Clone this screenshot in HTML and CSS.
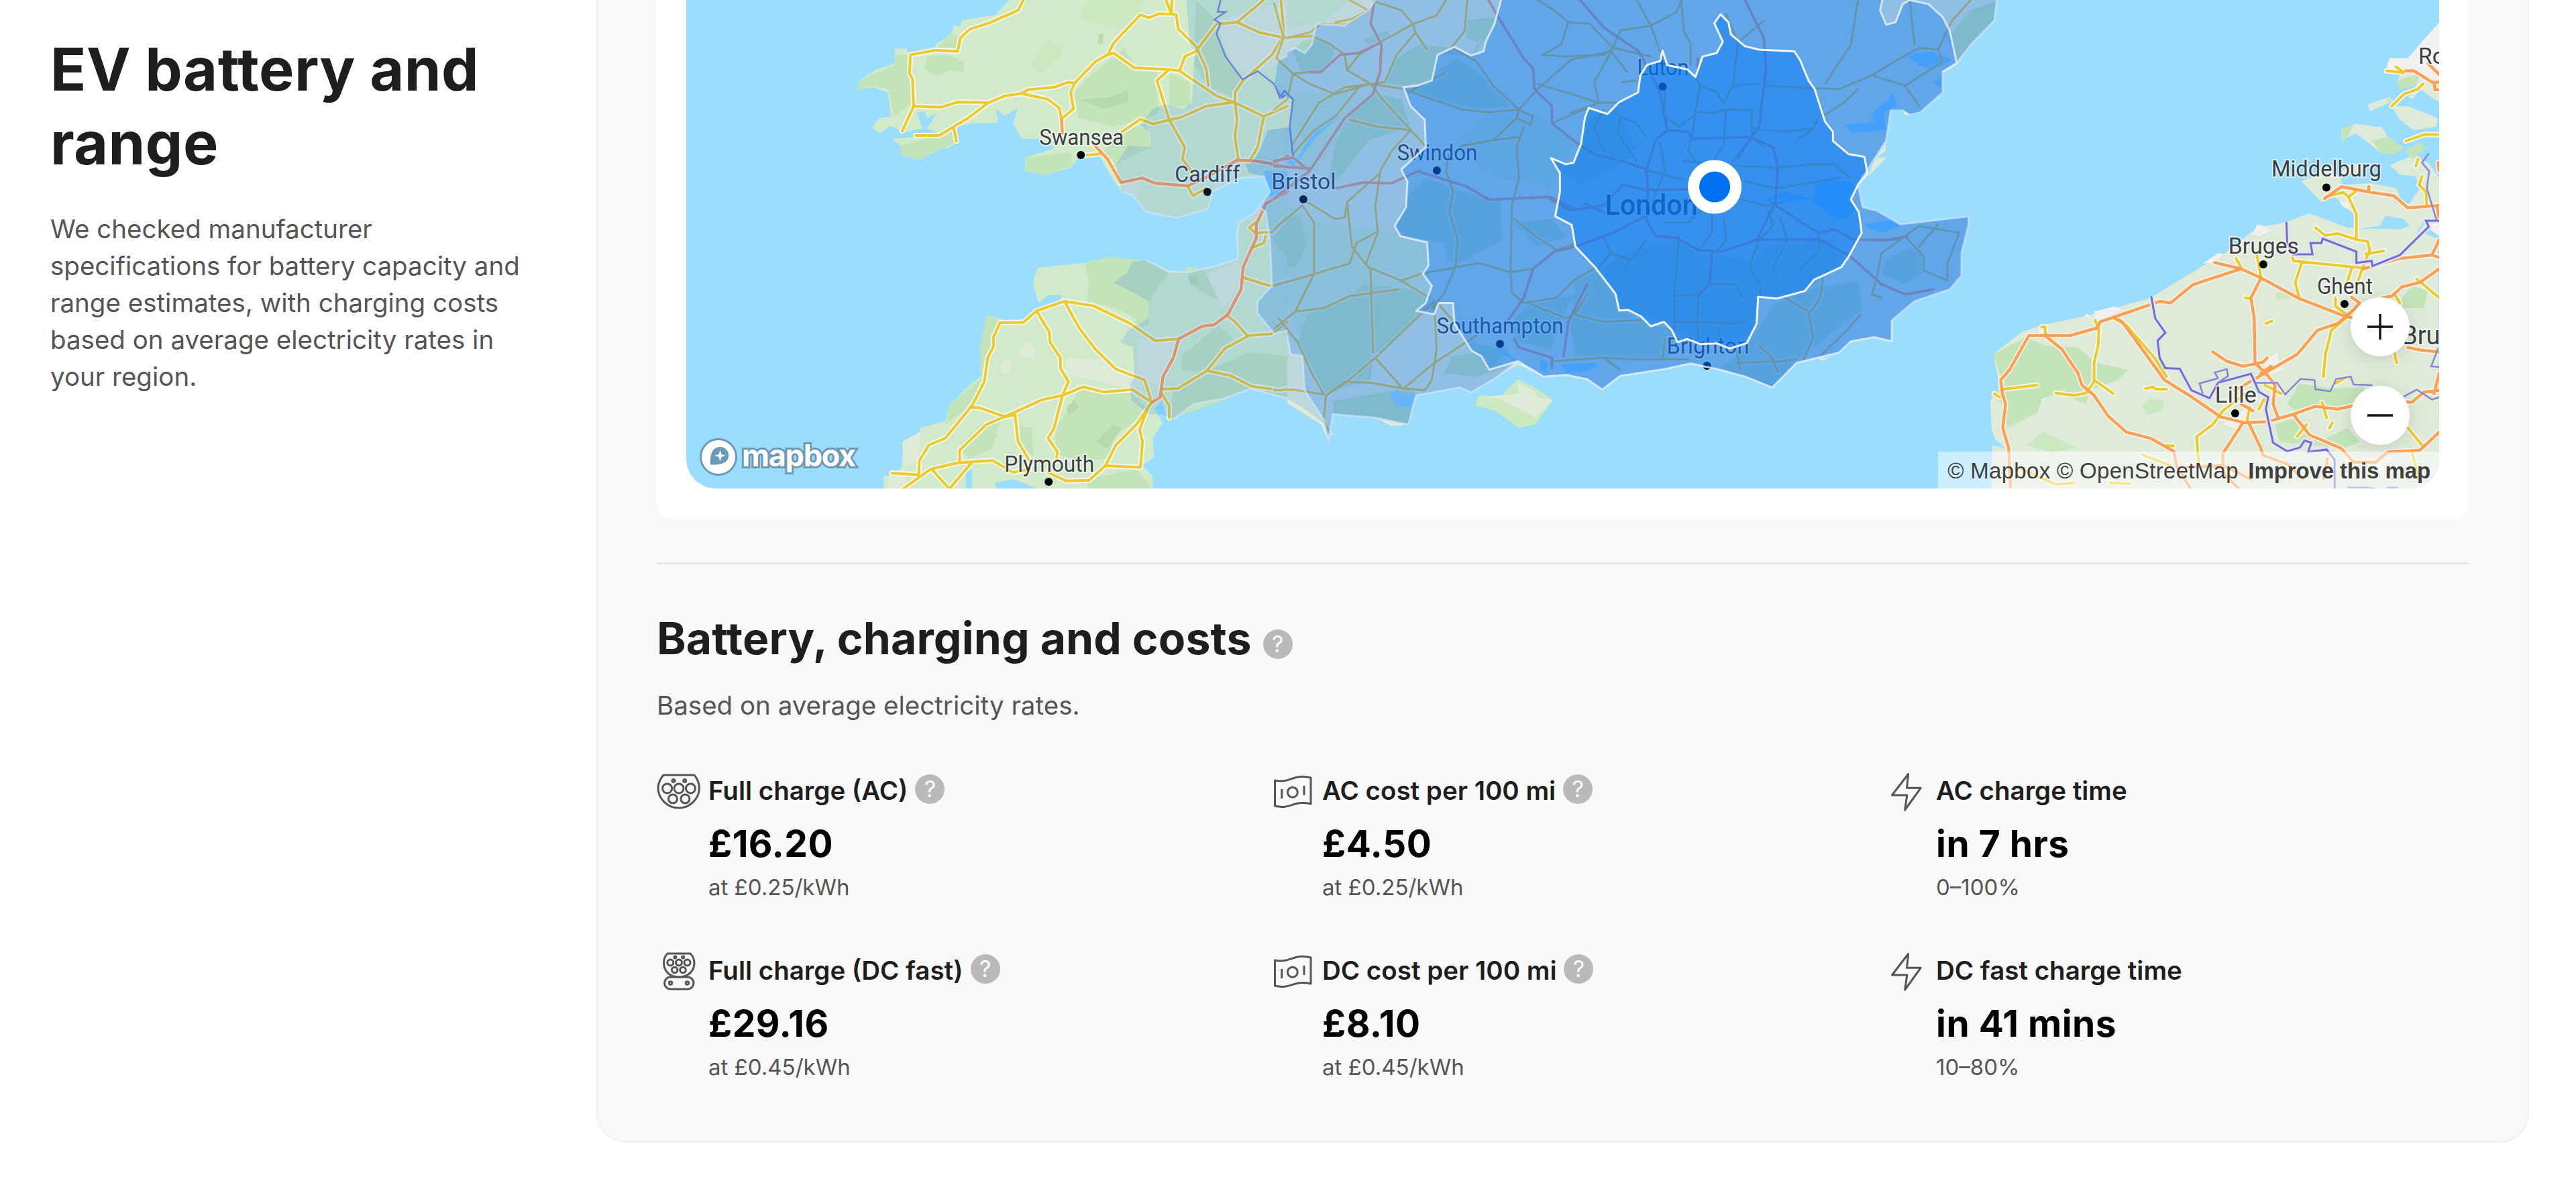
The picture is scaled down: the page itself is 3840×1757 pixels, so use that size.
FILE: index.html
```html
<!DOCTYPE html>
<html lang="en">
  <head>
    <meta charset="UTF-8" />
    <meta name="viewport" content="width=device-width, initial-scale=1.0" />
    <title>EV battery and range</title>
    <link rel="stylesheet" href="styles.css">
  </head>
  <body>
    <div class="page">
      <aside class="sidebar">
        <h1>EV battery and range</h1>
        <p>We checked manufacturer specifications for battery capacity and range estimates, with charging costs based on average electricity rates in your region.</p>
      </aside>

      <main class="panel">
        <!-- Range map -->
        <section class="map-card">
          <div class="map">
            <svg class="map-canvas" viewBox="1024 0 2612 728" preserveAspectRatio="none">
              <defs>
                <g id="west-yellow">
                  <path d="M925 0 L912 30 840 68 795 85 772 110 765 150 710 147 650 160 648 215 655 230 658 310 630 383 M658 310 L725 313 765 298 840 300 M663 396 L720 396 790 345 840 300 880 280 920 273 985 290 1012 315 1018 350 M755 370 L762 412 M920 273 L935 262 1000 255 1035 240 1050 243 1040 270 1047 318 1020 345 M1050 243 L1100 180 1130 160 1145 125 1210 43 1230 52 1255 40 1297 42 1302 85 1345 135 1370 200 1375 250 M1272 0 L1285 40 1287 0 M1130 160 L1145 155 1195 198 1280 203 1305 207 1395 280 1440 300 1510 340 1568 310 M1305 207 L1318 165 1345 150 1395 70 1445 65 1510 0 M1445 65 L1500 95 1568 112 M1280 203 L1250 235 1280 350 1318 430 1312 465 1340 510 M1165 385 L1210 348 1240 362 1310 342 1370 310 1440 298 1440 270 1460 235 1530 160 1555 110 M1440 298 L1445 350 1440 400 1448 465 M1510 340 L1495 430 1478 465 M1552 0 L1560 110 M1080 453 L1110 450 M1325 545 L1338 572 1370 550" />
                  <path d="M632 1428 L700 1370 765 1352 850 1345 900 1380 940 1370 M605 1382 L670 1387 672 1345 695 1300 735 1280 800 1185 830 1115 838 1045 853 1010 852 985 868 943 925 942 957 908 1025 880 1095 893 1185 945 1245 995 1303 990 M957 908 L988 970 990 1000 1015 1045 1015 1075 1035 1115 1020 1155 1000 1250 985 1280 1008 1320 1005 1345 M1025 880 L1050 935 1062 960 1100 1020 1150 1078 1220 1110 1235 1165 M795 1190 L815 1190 880 1217 905 1212 912 1290 945 1355 M770 1345 L770 1315 835 1240 880 1217 970 1168 1020 1155 1070 1130 1120 1145 1190 1138 1238 1175 M985 1380 L1030 1405 1085 1403 1125 1360 1150 1300 1200 1240 1238 1175 M1125 1360 L1210 1365 1215 1290 1208 1255 1230 1185 M705 1375 L745 1428 775 1385 800 1350 M1262 1137 L1300 1135 1372 1083 1415 1018 1475 980 1530 975 1568 940 M1372 1083 L1430 1097 1480 1128 1550 1140 1568 1135 M1458 810 L1525 835 1568 822 M1420 920 L1440 940 1470 980 M1262 1150 L1280 1185 1280 1220 M1490 680 L1530 678 1568 630 M1490 680 L1475 665 1495 645 M1515 690 L1510 710 1480 725" />
                </g>
                <g id="west-orange">
                  <path d="M1018 350 L1020 390 M1095 420 L1130 465 1162 533 1215 520 1245 535 1325 543 1375 515 1445 468 1490 470 1568 487 M1530 480 L1568 455 M1568 560 L1515 595 1492 655 1492 695 1460 780 1455 845 1423 918 1390 948 1360 953 1303 990 1290 1045 1265 1100 1258 1160 1238 1175" />
                </g>
                <g id="centre-yellow">
                  <path d="M28 110 L75 95 100 70 155 72 200 30 160 0 M200 30 L165 55 130 65 M0 10 L20 110 5 170 40 215 28 290 0 320 M20 110 L80 105 120 130 150 160 155 205 205 245 M40 215 L75 210 M155 205 L180 160 230 120 295 70 270 30 215 5 M295 70 L300 95 260 160 235 240 205 245 M295 70 L345 45 365 0 M410 0 L405 90 370 150 M300 95 L325 145 M40 215 L75 245 130 275 205 245 275 260 325 285 400 320 455 328 520 320 M235 240 L150 255 95 300 40 420 M180 255 L130 340 85 380 40 450 M205 245 L230 290 290 380 250 440 225 500 M290 380 L320 425 M160 350 L220 370 290 380 M285 270 L365 210 M520 320 L465 250 430 180 380 140 M520 320 L515 345 545 365 550 340 520 320 560 260 630 175 715 150 M515 345 L465 410 400 425 370 455 365 500 M465 410 L520 400 M530 370 L515 430 520 520 505 600 502 795 M365 500 L380 560 372 620 390 700 385 780 360 860 335 900 M60 600 L85 650 85 800 45 910 M60 600 L0 670 M70 590 L130 640 150 635 155 590 225 505 M155 590 L165 720 205 790 210 1030 M225 505 L215 600 220 680 195 770 M0 835 L85 800 160 770 175 710 215 680 M200 780 L270 820 310 800 435 768 502 795 550 785 M270 820 L330 870 M45 910 L105 900 160 865 265 845 M0 960 L45 910 M10 930 L50 1000 80 1090 105 1150 M340 880 L345 1020 335 1110 320 1140 M340 880 L215 1045 150 1120 110 1155 105 1230 118 1265 M215 1045 L270 1130 M110 1155 L150 1115 205 1118 275 1135 320 1140 M0 1140 L40 1138 105 1152 M350 890 L385 945 M430 980 L340 1060 275 1135" />
                  <path d="M560 0 L600 35 625 65 610 130 570 160 620 165 700 160 720 140 800 165 M625 65 L670 70 720 140 735 90 800 75 M770 0 L800 75 820 150 M865 0 L870 90 885 130 885 190 M800 75 L855 35 865 0 M720 140 L680 240 690 300 735 300 M715 150 L750 210 M630 330 L690 300 M560 245 L620 270 690 300 M740 240 L770 235 M590 360 L640 330 670 315 M1040 60 L985 125 M1240 0 L1225 130 1170 245 M1150 258 L1200 260 1270 220 1330 170 1370 140 1410 145 1420 180 M1350 0 L1360 130 M1480 0 L1440 60 1410 145 M1170 335 L1210 300 1240 260 M1270 220 L1340 250 1370 310 M1420 180 L1340 250 M510 640 L555 690 600 730 640 710 M502 795 L505 855 530 885 600 870 640 815 680 785 M640 915 L620 930 540 885 M640 920 L700 940 780 935 M590 1055 L700 1045 760 1050 880 1050 M700 1045 L735 1080 M640 915 L665 860 M825 1045 L830 990 M980 1060 L1075 1055 1110 1050 M1030 1010 L1055 1040 1070 1085 M980 1010 L990 1080 M1085 870 L1135 910 1145 985 1125 1050 M1165 815 L1160 870 1140 910 M1280 810 L1270 860 1290 870 M1245 920 L1220 960 1160 1040 M1250 700 L1330 700 1370 660 1455 680 M1340 690 L1380 750 1380 790 1430 820 M1455 680 L1430 770 1430 820 M1340 690 L1290 740 1280 810 M1410 655 L1370 720" />
                  <path d="M895 325 L930 330 960 320 1015 322 1015 400 M895 225 L905 250 895 325 890 380 M905 250 L940 270 955 300 975 250 1030 245 M960 40 L985 125 975 250 M960 320 L955 420 930 480 M1040 250 L1150 258 M1015 375 L1080 385 1145 375 1155 350 M1145 375 L1110 410 M890 380 L880 440 900 480 M830 250 L830 340 860 370 890 340 M735 340 L770 360 790 400 M700 320 L680 370 700 440 M735 340 L730 390 770 470 M800 500 L870 525 M800 600 L830 500 820 420 M870 470 L930 480 1065 490 1140 480 1190 480 1220 515 M975 470 L1015 400 1040 430 M1000 530 L1065 550 1200 520 M985 580 L1040 600 1085 590 M830 650 L880 650 910 610 M930 630 L930 680 900 735 M860 690 L850 860 850 965 M900 860 L900 1000 M850 865 L900 860 925 830 980 830 995 870 M845 940 L900 940 975 945 1020 930 M955 640 L960 700 940 735 M1030 700 L1010 780 1035 840 1030 870 M1050 620 L1060 660 1030 700 M1075 640 L1090 700 1060 780 1070 810 M1155 680 L1160 730 1115 790 M700 690 L715 740 760 760 790 700 M715 740 L690 780 M740 800 L755 760 M945 960 L950 1000" />
                </g>
                <g id="centre-orange">
                  <path d="M213 0 L205 70 228 130 225 210 210 275 150 345 75 500 0 580 M75 210 L100 210 140 160 180 155 225 125 M0 470 L40 460 75 500 M0 485 L75 492 M130 550 L190 533 250 535 305 500 410 545 455 583 585 575 640 610 M455 0 L485 70 530 170 550 200 553 260 590 310 590 360 640 415 M650 0 L700 80 775 150 820 270 M1000 0 L1040 110 1045 200 M900 170 L900 210 M640 720 L595 735 550 785 530 870 495 940 M1225 750 L1290 830 1340 860 1400 845 M1235 700 L1300 702 1345 690 M510 990 L520 1015 590 1045 590 1075 M615 1040 L625 940 665 830" />
                  <path d="M820 270 L835 380 880 385 890 405 1010 400 1060 430 1070 490 1065 590 1025 700 950 735 900 730 855 695 810 690 790 640 795 560 790 500 810 410 835 380 M640 415 L680 450 750 475 800 500 M585 580 L630 615 700 600 740 540 790 555 890 552 M640 720 L720 680 790 630 M1045 200 L1030 370 985 460 M1065 600 L1110 640 1155 680 1190 670 1230 700 M1025 700 L1160 700 1225 750 M930 735 L925 830 900 865 M660 595 L700 620" />
                </g>
                <g id="east-yellow">
                  <path d="M1097 207 L1140 212 1120 195 M1110 310 L1140 275 1175 260 1188 245 M1145 412 L1190 393 1228 393 M1175 465 L1170 485 M1185 515 L1178 540 1195 560 1197 600 M945 575 L990 562 1002 575 1022 625 1022 700 1050 705 1055 730 1035 790 1025 825 M1002 575 L1020 560 M920 665 L945 688 975 682 1022 700 M1045 742 L1090 733 M862 745 L865 762 1040 783 M887 765 L870 825 880 870 M775 745 L785 812 M1010 785 L1000 820 M723 755 L735 780 M1172 815 L1228 870 M970 870 L970 895 1005 925 M1000 925 L960 965 945 1035 940 1100 M745 870 L760 872 M797 945 L812 938 M240 955 L248 955 250 980 M372 935 L382 960 380 1010 370 1060 370 1110 418 1150 M370 1115 L350 1148 320 1155 275 1148 M145 1137 L228 1125 M122 1150 L135 1160 M420 930 L450 950 520 1045 550 1100 M498 1135 L515 1130 525 1137 550 1137 M665 1240 L625 1275 630 1360 M665 1240 L690 1200 745 1150 M757 1190 L750 1230 M780 1195 L795 1160 M795 1125 L835 1150 M937 1175 L948 1220 M898 1240 L875 1275 M955 1250 L962 1235 M548 1302 L568 1302 M1120 865 L1130 885 M1117 1030 L1122 1060 M1150 1250 L1185 1300 M970 1120 L995 1103 M180 1365 L275 1415 320 1410 M410 1410 L460 1413 M490 1328 L560 1360 M1160 1320 L1175 1390" />
                </g>
                <g id="east-orange">
                  <path d="M1228 240 L1210 240 1165 207 1145 207 M1200 185 L1228 218 M1215 240 L1217 262 1228 262 M943 580 L985 545 1050 560 1115 572 1150 607 1228 600 M985 545 L1025 555 M1053 545 L1053 560 M1225 475 L1228 500 M1222 600 L1228 640 M1228 700 L1210 745 1228 752 M670 767 L735 785 785 812 880 872 985 920 1010 928 M735 785 L615 832 560 885 535 880 385 940 378 958 310 980 208 980 160 1080 138 1110 142 1150 150 1180 143 1250 158 1310 162 1428 M785 812 L760 870 768 930 770 1060 800 1095 820 1125 815 1180 828 1222 M665 1028 L700 1055 740 1070 790 1058 800 1045 M720 1140 L750 1120 875 1035 925 965 975 945 1015 905 1030 885 1010 868 M1040 785 L1130 755 1210 745 M1228 785 L1180 825 1135 838 1110 865 1085 870 M248 980 L290 1020 330 1090 340 1125 370 1155 405 1215 450 1262 510 1280 568 1318 575 1360 610 1428 M420 928 L440 940 545 1110 600 1150 685 1218 745 1235 800 1232 865 1210 920 1187 975 1195 1070 1170 1160 1175 1190 1145 1228 1140 M865 1210 L905 1270 985 1310 1015 1350 1070 1350 1100 1320 1180 1315 1228 1262 M740 1235 L690 1325 690 1380 730 1428 M755 1237 L785 1310 790 1330 850 1355 890 1400 M1150 1015 L1180 1022 1228 1028 M735 1180 L765 1200 M810 1070 L785 1090 M600 1365 L690 1360 760 1400 M950 1340 L940 1400 M1228 1090 L1215 1150" />
                </g>
              </defs>

              <!-- Land -->
              <g class="west">
                <path class="grass" d="M890 0 L855 45 820 50 775 60 772 80 757 72 750 100 712 130 708 150 645 155 640 142 612 142 612 185 565 205 525 235 520 262 560 255 595 270 603 340 575 345 557 370 575 390 600 368 640 385 680 375 665 330 685 325 690 345 715 330 690 375 720 390 700 402 660 400 605 405 625 425 630 455 675 467 700 440 740 432 765 415 765 370 800 360 865 358 858 320 880 338 912 315 900 360 920 405 960 405 1000 430 985 440 930 460 928 498 975 512 1040 490 1060 460 1110 455 1140 520 1165 560 1190 570 1225 620 1300 636 1375 610 1385 560 1450 520 1510 515 1525 560 1490 620 1450 650 1442 690 1448 755 1400 775 1330 795 1280 790 1225 760 1190 765 1135 750 1075 768 960 782 948 825 962 885 985 862 1020 862 1010 885 960 905 940 930 880 935 838 920 833 970 820 1010 825 1095 790 1130 745 1185 735 1230 675 1250 670 1275 632 1290 628 1385 585 1390 585 1428 L1240 1428 1240 1390 1215 1360 1243 1335 1240 1280 1265 1235 1265 1210 1290 1225 1340 1180 1410 1165 1480 1135 1568 1165 1568 0 Z" />
                <path class="wood" d="M690 165 L740 160 780 180 780 210 745 205 715 222 685 200 Z M612 160 L645 160 650 200 655 300 610 340 598 262 565 250 520 262 525 235 612 190 Z M750 95 L770 110 765 150 712 145 Z M625 425 L765 380 760 415 675 465 628 455 Z M1080 230 L1170 140 1200 200 1250 210 1255 330 1225 345 1145 370 1060 345 1050 270 Z M930 460 L1040 445 1045 485 975 512 930 500 Z M1160 385 L1225 360 1235 430 1150 480 1120 440 Z M1280 215 L1330 240 1330 310 1280 310 Z M1075 770 L1135 750 1225 762 1280 795 1240 860 1230 900 1230 950 1150 900 1080 880 1085 820 Z M1320 780 L1360 785 1425 850 1400 880 1330 830 Z M1190 945 L1235 880 1220 955 Z M1060 1140 L1190 1150 1230 1200 1150 1270 1130 1340 1060 1345 1000 1325 1005 1250 Z M835 920 L875 940 835 1050 820 1100 820 1010 Z M825 1100 L800 1180 735 1240 745 1185 Z M770 1300 L820 1240 870 1230 850 1310 790 1340 Z M1310 1040 L1400 950 1440 1000 1370 1090 1310 1080 Z M1380 1080 L1470 1030 1568 1040 1568 1160 1480 1135 1420 1165 1280 1225 1290 1140 Z M905 1240 L945 1250 950 1330 910 1300 Z M1080 1400 L1200 1370 1240 1428 1080 1428 Z M1345 0 L1395 60 1400 110 1430 190 1455 235 1440 290 1375 250 1340 190 Z M1530 700 L1568 640 1568 750 Z" />
                <path class="lawn" d="M1080 0 L1220 0 1190 70 1140 80 1065 55 Z M940 190 L985 120 1025 130 1010 170 970 215 Z" />
                <path class="hill" d="M1060 290 L1130 285 1180 262 1180 300 1120 318 Z M1105 125 L1110 100 1120 98 1118 130 Z M1030 1190 L1050 1170 1060 1190 1035 1215 Z M1100 1290 L1145 1240 1165 1250 1130 1310 Z M1325 810 L1345 808 1355 830 1335 830 Z" />
                <path class="field" d="M915 1020 L935 998 955 1015 950 1045 915 1040 Z M870 1065 L885 1048 897 1055 890 1090 870 1088 Z M1030 1045 L1120 1050 1150 1085 1210 1115 1190 1135 1090 1110 1025 1090 Z M1395 60 L1568 0 1568 170 1480 220 1430 190 Z M1370 800 L1450 765 1455 830 1410 900 Z M630 1290 L675 1260 670 1345 600 1385 590 1428 640 1428 Z M1160 540 L1215 520 1200 575 1168 562 Z M1205 990 L1300 995 1260 1130 1200 1100 Z" />
                <path class="water" d="M1510 500 L1568 500 1568 555 1530 590 Z M1245 1195 L1262 1170 1275 1220 1265 1240 Z M855 1410 L900 1400 935 1415 960 1428 860 1428 Z M785 1380 L800 1370 800 1428 785 1428 Z" />
              </g>
              <g class="centre">
                <path class="field" d="M28 0 L1535 0 1530 60 1480 130 1450 185 1420 210 1420 270 1375 325 1340 335 1335 320 1310 320 1300 410 1260 500 1240 540 1250 605 1280 615 1330 655 1475 632 1475 655 1460 740 1460 805 1435 845 1360 880 1312 935 1312 997 1275 985 1225 997 1200 1030 1110 1060 1058 1132 1000 1100 940 1078 885 1062 830 1078 735 1098 697 1138 665 1108 620 1095 572 1100 518 1065 470 1105 418 1146 395 1132 302 1155 285 1240 250 1245 215 1220 125 1210 115 1290 100 1240 28 1178 Z" />
                <path class="grass" d="M28 0 L160 0 110 60 28 80 Z M28 280 L160 260 200 290 90 500 28 470 Z M75 640 L330 700 330 900 220 1040 150 1130 105 1150 60 1000 28 900 28 600 Z M380 420 L500 300 600 360 640 420 590 540 470 520 Z" />
                <path class="wood" d="M40 150 L60 120 95 110 130 140 110 210 60 220 Z M160 340 L205 270 270 290 290 370 200 410 150 500 110 560 130 420 Z M28 620 L55 640 70 720 45 780 28 775 Z M70 920 L150 880 190 830 320 850 330 900 210 1040 205 1110 110 1150 50 1000 Z M190 115 L240 90 250 110 200 130 Z M310 130 L380 140 430 160 440 110 418 162 347 160 335 235 275 250 235 240 260 170 Z M285 265 L390 170 480 260 500 310 430 320 330 290 Z M290 560 L320 520 400 560 480 580 485 700 390 770 370 760 360 710 280 690 256 660 Z M640 820 L690 790 730 850 740 910 800 950 850 960 840 1050 640 1040 630 960 Z M540 890 L640 860 610 930 590 1020 520 1000 500 950 Z M505 650 L590 640 620 690 560 720 Z M410 1000 L500 1020 457 1080 Z M125 1170 L300 1130 285 1240 215 1220 125 1210 Z M400 60 L470 50 460 100 440 130 410 110 Z M380 1040 L430 1030 500 1070 430 1100 360 1090 Z M1060 890 L1150 840 1240 820 1250 900 1150 1010 1110 1050 1058 1132 950 1075 1000 1020 1030 960 Z M1300 760 L1370 710 1380 790 1340 830 1290 800 Z M1430 110 L1480 30 1535 0 1530 60 1480 130 1450 185 Z M670 340 L730 310 770 430 750 470 650 540 610 500 650 450 Z M740 740 L860 700 900 740 1020 760 1040 720 1190 700 1200 780 1130 850 1030 870 1010 980 900 1000 830 940 740 900 700 790 Z" />
                <path class="water" d="M50 460 L90 370 130 330 135 345 90 400 40 490 28 480 28 455 Z M1340 160 L1400 150 1440 175 1400 205 1370 190 Z M1305 290 L1315 270 1322 310 1295 330 1300 380 1230 388 1210 365 1275 355 1270 330 Z M1145 590 L1150 540 1180 515 1235 540 1225 583 1240 610 1210 640 1180 630 1160 605 Z M1040 585 L1085 560 1145 580 1060 595 Z M1255 655 L1320 640 1330 660 1290 680 1260 665 Z M245 1150 L262 1140 270 1155 300 1150 290 1190 260 1185 Z M470 1020 L485 1020 530 1065 515 1060 Z M565 1055 L580 1055 578 1090 565 1080 Z M610 1065 L690 1060 670 1085 620 1090 Z M1400 240 L1418 225 1415 260 Z" />
                <path class="lawn" d="M518 1108 L550 1130 592 1168 555 1240 520 1250 470 1200 427 1185 435 1155 480 1160 Z" />
                <path class="field" d="M1262 515 L1285 430 1300 410 1298 440 1280 460 1300 460 1280 490 Z M435 1160 L520 1150 515 1115 550 1140 560 1160 592 1168 555 1220 520 1195 480 1165 Z M1340 325 L1380 325 1345 337 Z M1155 1047 L1182 1045 1165 1053 Z" />
              </g>
              <g class="east">
                <path class="field" d="M1228 65 L1150 170 1105 170 1095 205 1130 215 1122 250 1140 270 1155 285 1195 310 1228 375 1228 335 1180 310 1225 340 1228 1428 115 1428 117 1300 112 1170 135 1130 120 1035 190 970 240 950 360 920 510 870 600 805 700 735 775 665 845 650 905 623 1000 665 1130 670 1200 640 1228 640 Z" />
                <path class="water" d="M1180 260 L1228 300 1228 470 1190 440 1150 470 1145 420 1160 405 1228 380 1200 340 1150 310 Z M1000 660 L1030 670 1080 665 1100 625 1140 650 1165 660 1175 680 1190 655 1228 600 1228 560 1100 540 1060 520 1000 560 980 590 Z M1228 640 L1200 650 1190 680 1228 700 Z M1135 230 L1180 260 1140 290 1105 300 1100 270 Z M1060 500 L1228 500 1228 570 1100 540 Z M115 1250 L125 1285 150 1310 117 1300 Z" />
                <path class="field" d="M1110 310 L1150 310 1225 345 1220 370 1165 380 1130 350 Z M1050 305 L1105 283 1112 295 1085 310 1055 325 Z M985 410 L985 375 1020 362 1085 372 1100 400 1140 430 1115 452 1080 445 1050 415 1020 390 Z M885 530 L940 500 985 515 985 540 1060 535 1120 550 1130 570 1115 590 1150 600 1228 600 1228 640 1195 640 1170 680 1140 640 1095 630 1080 660 1020 670 1030 640 990 600 965 570 935 590 Z M1105 482 L1160 455 1200 475 1228 520 1228 600 1150 600 1180 550 1170 515 1130 510 Z M1035 585 L1075 580 1065 620 1035 628 Z M980 512 L1000 482 1045 478 1030 505 Z" />
                <path class="wood" d="M120 1035 L200 985 250 1010 330 1015 375 1060 455 1080 430 1110 360 1140 350 1180 280 1150 240 1165 230 1205 155 1250 143 1180 120 1160 140 1110 Z M850 1180 L880 1120 960 1135 1040 1130 1050 1175 990 1195 930 1185 870 1200 Z M820 1240 L870 1220 930 1290 1000 1250 1030 1290 990 1310 830 1290 Z M1130 880 L1160 835 1200 850 1190 900 1140 900 Z M985 375 L1015 365 1000 400 987 412 Z M1060 410 L1100 400 1140 430 1115 452 1080 445 Z M1145 440 L1180 415 1195 435 1160 465 Z M1122 235 L1180 215 1170 250 1130 260 Z" />
                <path class="lawn" d="M490 1185 L510 1165 545 1170 540 1200 500 1212 Z M200 1300 L245 1260 330 1310 260 1320 Z M820 855 L880 850 875 870 825 875 Z M1100 280 L1112 290 1095 305 Z" />
                <path class="urban" d="M1228 65 L1150 170 1105 170 1095 205 1145 200 1180 225 1228 240 Z M765 685 L775 655 790 660 810 672 780 690 Z M370 910 L420 895 440 905 400 925 375 935 Z M640 770 L680 738 690 745 660 768 Z M690 1240 L715 1210 760 1190 745 1240 720 1250 Z M790 1060 L825 1030 830 1060 845 1080 810 1090 Z M980 590 L1000 590 1005 612 990 605 Z M1050 1340 L1120 1330 1100 1350 1080 1380 Z M1195 640 L1228 640 1228 690 1205 670 Z M230 970 L240 950 255 960 250 975 Z M345 925 L352 915 365 930 Z M590 1350 L680 1345 690 1370 610 1375 Z" />
              </g>

              <!-- Roads and country borders -->
              <g class="west">
                <use class="road-casing" href="#west-yellow" />
                <use class="road-casing" href="#west-orange" />
                <use class="road-yellow" href="#west-yellow" />
                <use class="road-orange" href="#west-orange" />
                <path class="border thin" d="M1405 0 L1398 35 1417 35 1390 57 1405 68 1395 98 1417 165 1458 232 1495 208 1535 245 1552 285 1568 275" />
              </g>
              <g class="centre">
                <use class="road-casing soft" href="#centre-yellow" />
                <use class="road-casing soft" href="#centre-orange" />
                <use class="road-yellow narrow" href="#centre-yellow" />
                <use class="road-orange narrow" href="#centre-orange" />
                <path class="border thin" d="M2 250 L12 285 22 265 40 290 33 370 40 455" />
              </g>
              <g class="east">
                <use class="road-casing" href="#east-yellow" />
                <use class="road-casing" href="#east-orange" />
                <use class="road-yellow" href="#east-yellow" />
                <use class="road-orange" href="#east-orange" />
                <path class="border-halo" d="M512 865 L522 930 547 972 528 995 533 1045 547 1075 583 1077 612 1140 657 1163 678 1118 760 1092 780 1145 803 1160 797 1195 815 1293 850 1318 882 1307 893 1287 910 1293 902 1320 948 1313 968 1343 968 1428 M848 648 L850 710 865 743 913 743 908 710 935 710 938 697 1022 735 1022 768 1060 762 1062 777 1130 745 1202 662 1195 645 1228 645" />
                <path class="border" d="M512 865 L522 930 547 972 528 995 533 1045 547 1075 583 1077 612 1140 657 1163 678 1118 760 1092 780 1145 803 1160 797 1195 815 1293 850 1318 882 1307 893 1287 910 1293 902 1320 948 1313 968 1343 968 1428 M848 648 L850 710 865 743 913 743 908 710 935 710 938 697 1022 735 1022 768 1060 762 1062 777 1130 745 1202 662 1195 645 1228 645" />
                <path class="border thin" d="M1202 448 L1185 475 1203 500 1197 550 1222 645 M640 1150 L632 1120 678 1105 670 1088 700 1078 703 1098 678 1118 M770 1118 L825 1118 845 1152 883 1107 918 1110 920 1137 957 1143 972 1107 1008 1100 1015 1123 1062 1125 M1140 1158 L1172 1138 1210 1167 1228 1160 M1225 1018 L1208 1070 1228 1072 M1000 1424 L1050 1424 1070 1428 M1098 1424 L1125 1424" />
              </g>

              <!-- Cities -->
              <g class="city-dots">
                <circle cx="1612" cy="231" r="6" />
                <circle cx="1800.5" cy="286" r="6" />
                <circle cx="1943.5" cy="297" r="6" />
                <circle cx="1564" cy="718" r="6" />
                <circle cx="2142.5" cy="254" r="6" />
                <circle cx="2479" cy="129" r="6" />
                <circle cx="2236.5" cy="512.5" r="6" />
                <circle cx="2545" cy="545" r="6" />
                <circle cx="3468" cy="279.5" r="6" />
                <circle cx="3374" cy="394" r="6" />
                <circle cx="3495" cy="453" r="6" />
                <circle cx="3332" cy="616" r="6" />
              </g>
              <g class="city-names">
                <text x="1550" y="216.5" textLength="126" lengthAdjust="spacingAndGlyphs">Swansea</text>
                <text x="1752" y="271" textLength="97" lengthAdjust="spacingAndGlyphs">Cardiff</text>
                <text x="1896" y="282" textLength="96" lengthAdjust="spacingAndGlyphs">Bristol</text>
                <text x="1498" y="703" textLength="134" lengthAdjust="spacingAndGlyphs">Plymouth</text>
                <text x="2083" y="239" textLength="120" lengthAdjust="spacingAndGlyphs">Swindon</text>
                <text x="2441" y="112" textLength="77" lengthAdjust="spacingAndGlyphs">Luton</text>
                <text class="capital" x="2393" y="320.5" textLength="138" lengthAdjust="spacingAndGlyphs">London</text>
                <text x="2142" y="497.5" textLength="189" lengthAdjust="spacingAndGlyphs">Southampton</text>
                <text x="2485" y="527" textLength="123" lengthAdjust="spacingAndGlyphs">Brighton</text>
                <text x="3605" y="95.5">Ro</text>
                <text x="3386" y="263" textLength="164" lengthAdjust="spacingAndGlyphs">Middelburg</text>
                <text x="3322" y="378" textLength="105" lengthAdjust="spacingAndGlyphs">Bruges</text>
                <text x="3454" y="438" textLength="83" lengthAdjust="spacingAndGlyphs">Ghent</text>
                <text class="large" x="3580" y="513">Bru</text>
                <text x="3302" y="600" textLength="62" lengthAdjust="spacingAndGlyphs">Lille</text>
              </g>

              <!-- Range zones, widest first -->
              <g class="west">
                <path class="zone-1" d="M1322 0 L1330 130 1345 150 1340 190 1336 300 1315 318 1270 305 1240 318 1210 365 1232 385 1235 430 1180 425 1150 480 1165 560 1190 570 1225 620 1300 636 1375 610 1385 560 1450 520 1510 515 1525 560 1490 620 1450 650 1445 690 1448 755 1400 775 1330 795 1280 795 1225 760 1190 765 1175 800 1145 825 1232 880 1228 930 1180 965 1162 1000 1192 1015 1196 1100 1185 1120 1188 1170 1230 1210 1265 1210 1290 1225 1340 1180 1410 1165 1480 1135 1568 1165 1568 0 Z" />
                <path class="zone-2" d="M1568 165 L1545 180 1537 240 1555 290 1568 280 Z M1568 372 L1520 380 1500 440 1482 475 1465 480 1475 505 1510 515 1525 560 1500 605 1515 620 1525 700 1530 835 1495 880 1495 915 1535 975 1568 965 Z" />
                <path class="zone-line soft" d="M1165 560 L1190 570 1225 620 1300 636 1375 610 1385 560 1450 520 1510 515 1525 560 1490 620 1450 650 1445 690 1448 755 1400 775 1330 795 1280 795 1225 760 M1290 1225 L1340 1180 1410 1165 1480 1135 1568 1165 M1500 605 L1515 620 1525 700 1530 835 1495 880 1495 915 1535 975 1568 965" />
              </g>
              <g class="centre">
                <path class="zone-1" d="M28.509 0 L1535 0 1530 60 1480 130 1450 185 1420 210 1420 270 1375 325 1350 333 1335 320 1310 320 1300 410 1260 500 1240 540 1250 605 1280 615 1330 655 1475 632 1475 655 1460 740 1460 805 1435 845 1360 880 1312 935 1312 997 1275 985 1225 997 1200 1030 1110 1060 1058 1132 1000 1100 940 1078 885 1062 830 1078 735 1098 697 1138 665 1108 620 1095 572 1100 518 1055 470 1105 418 1146 395 1132 302 1155 285 1240 215 1220 125 1210 115 1290 105 1235 60 1190 28.509 1165 Z" />
                <path class="zone-2" d="M215 0 L200 30 150 75 90 70 80 130 65 155 45 140 28.509 150 28.509 285 40 290 35 370 28.509 372 28.509 980 35 1035 60 1040 65 1140 105 1225 115 1290 125 1210 215 1220 285 1240 302 1155 395 1132 418 1146 470 1105 518 1055 572 1100 620 1095 665 1108 697 1138 735 1098 830 1078 885 1062 940 1078 1000 1100 1058 1132 1110 1060 1200 1030 1225 997 1275 985 1312 997 1312 935 1360 880 1435 845 1460 805 1460 740 1475 655 1475 632 1330 655 1280 615 1250 605 1240 540 1260 500 1300 410 1310 320 1335 320 1350 333 1375 325 1420 270 1420 210 1450 185 1480 130 1530 60 1535 0 Z" />
                <path class="zone-3" d="M482 0 L468 70 450 120 445 150 418 162 383 137 347 160 335 235 305 250 275 255 290 310 320 350 322 430 270 495 283 530 280 605 256 660 268 690 325 708 328 775 316 800 335 835 322 885 302 908 340 918 350 885 380 885 383 945 420 1025 440 1040 457 1080 518 1055 572 1100 620 1095 665 1108 697 1138 735 1098 830 1078 885 1062 940 1078 1000 1100 1058 1132 1110 1060 1200 1030 1225 997 1275 985 1312 997 1312 935 1360 880 1435 845 1460 805 1460 740 1475 655 1475 632 1330 655 1280 615 1250 605 1240 540 1260 500 1300 410 1310 320 1335 320 1350 333 1375 325 1420 270 1420 210 1450 185 1435 90 1420 50 1390 12 1350 0 1335 12 1320 65 1300 72 1287 30 1292 0 Z" />
                <path class="zone-4" d="M948 42 L965 65 970 100 1000 135 1030 145 1105 150 1117 175 1135 235 1148 260 1170 355 1187 385 1187 412 1220 450 1254 458 1260 507 1240 540 1225 583 1242 620 1248 680 1220 750 1205 780 1147 817 1127 850 1068 872 1028 867 1025 945 1004 1002 968 1018 940 1003 905 1005 877 990 857 1000 845 965 828 940 800 953 780 925 752 905 733 907 725 858 680 778 640 720 632 657 597 632 607 560 607 505 588 462 620 480 636 475 652 420 660 345 668 315 708 333 733 298 773 270 778 220 792 190 820 178 825 148 835 190 878 203 895 225 910 165 940 155 953 122 935 68 Z" />
                <path class="zone-line soft" d="M215 0 L200 30 150 75 90 70 80 130 65 155 45 140 28 150 M28 980 L35 1035 60 1040 65 1140 105 1225 115 1290 125 1210 215 1220 285 1240 302 1155 395 1132 418 1146 470 1105 518 1055 M1535 0 L1530 60 1480 130 1450 185 1420 210 1420 270 1375 325 M1310 320 L1300 410 1240 540 1250 605 1280 615 1330 655 1475 632 1475 655 1460 740 1460 805 1435 845 1360 880 1312 935" />
                <path class="zone-line" d="M482 0 L468 70 450 120 445 150 418 162 383 137 347 160 335 235 305 250 275 255 290 310 320 350 322 430 270 495 283 530 280 605 256 660 268 690 325 708 328 775 316 800 335 835 322 885 302 908 340 918 350 885 380 885 383 945 420 1025 440 1040 457 1080 518 1055 572 1100 620 1095 665 1108 697 1138 735 1098 830 1078 885 1062 940 1078 1000 1100 1058 1132 1110 1060 1200 1030 1225 997 1275 985 1312 997 1312 935 M1420 210 L1450 185 1435 90 1420 50 1390 12 1350 0 1335 12 1320 65 1300 72 1287 30 1292 0" />
                <path class="zone-line strong" d="M948 42 L965 65 970 100 1000 135 1030 145 1105 150 1117 175 1135 235 1148 260 1170 355 1187 385 1187 412 1220 450 1254 458 1260 507 1240 540 1225 583 1242 620 1248 680 1220 750 1205 780 1147 817 1127 850 1068 872 1028 867 1025 945 1004 1002 968 1018 940 1003 905 1005 877 990 857 1000 845 965 828 940 800 953 780 925 752 905 733 907 725 858 680 778 640 720 632 657 597 632 607 560 607 505 588 462 620 480 636 475 652 420 660 345 668 315 708 333 733 298 773 270 778 220 792 190 820 178 825 148 835 190 878 203 895 225 910 165 940 155 953 122 935 68 Z" />
              </g>

              <!-- Starting point -->
              <circle class="marker" cx="2556.5" cy="278.5" r="31.5" />
            </svg>

            <div class="map-logo">
              <svg viewBox="0 0 56 56">
                <circle cx="28" cy="28" r="26.500" fill="#fff" stroke="#6c9ab5" stroke-width="3" />
                <path d="M16 39.500 C15 24 19 13 31 13 A12.500 12.500 0 0 1 43 25.500 C43 37 32 40 16 39.500 Z" fill="#6c9ab5" />
                <path d="M30.500 17.500 L32.500 24 39 26 32.500 28 30.500 34.500 28.500 28 22 26 28.500 24 Z" fill="#fff" />
              </svg>
              <span>mapbox</span>
            </div>

            <div class="map-controls">
              <button aria-label="Zoom in">
                <svg viewBox="0 0 44 44"><path d="M2 22 H42 M22 2 V42" /></svg>
              </button>
              <button aria-label="Zoom out">
                <svg viewBox="0 0 44 44"><path d="M2 22 H42" /></svg>
              </button>
            </div>

            <div class="map-attribution">© Mapbox © OpenStreetMap <b>Improve this map</b></div>
          </div>
        </section>

        <hr />

        <!-- Charging costs -->
        <h2>Battery, charging and costs <span class="help">?</span></h2>
        <p class="intro">Based on average electricity rates.</p>

        <div class="metrics">
          <div class="metric">
            <svg class="icon" viewBox="0 0 66 60">
              <path d="M10 4 H56 C61 10 63.500 17 63.500 24 A30.800 30.800 0 0 1 2 24 C2 17 5 10 10 4 Z" />
              <circle cx="15.600" cy="24" r="7" />
              <circle cx="33" cy="24" r="7" />
              <circle cx="50.500" cy="24" r="7" />
              <circle cx="24" cy="39.500" r="6.500" />
              <circle cx="42.400" cy="39.500" r="6.500" />
              <circle cx="25" cy="12.500" r="2" />
              <circle cx="41.700" cy="12.500" r="2" />
            </svg>
            <div>
              <div class="metric-label">Full charge (AC) <span class="help">?</span></div>
              <div class="metric-value">£16.20</div>
              <div class="metric-note">at £0.25/kWh</div>
            </div>
          </div>

          <div class="metric">
            <svg class="icon" viewBox="0 0 66 60">
              <path d="M6.500 12 C30 17 34 1 60 8 V47 C34 41 30 56 6.500 50 Z" />
              <circle cx="32.800" cy="29.700" r="7.500" />
              <path d="M16.700 25 V39 M50 20 V34" />
            </svg>
            <div>
              <div class="metric-label">AC cost per 100 mi <span class="help">?</span></div>
              <div class="metric-value">£4.50</div>
              <div class="metric-note">at £0.25/kWh</div>
            </div>
          </div>

          <div class="metric">
            <svg class="icon" viewBox="0 0 66 60">
              <path d="M35.600 2.500 L33.500 23.300 H54.200 L30.600 56 L33.800 34 H11.400 Z" />
            </svg>
            <div>
              <div class="metric-label">AC charge time</div>
              <div class="metric-value">in 7 hrs</div>
              <div class="metric-note">0–100%</div>
            </div>
          </div>

          <div class="metric">
            <svg class="icon" viewBox="0 0 66 60">
              <path d="M16 2 H50 C54 6 56 11 56 16 C56 27 48 37 33 37 C18 37 10.500 27 10.500 16 C10.500 11 12 6 16 2 Z" />
              <rect x="11.500" y="37" width="43.500" height="18" rx="9" />
              <circle cx="20.300" cy="15.500" r="4.500" />
              <circle cx="33" cy="15.500" r="4.500" />
              <circle cx="45.500" cy="15.500" r="4.500" />
              <circle cx="26.700" cy="26.500" r="4.300" />
              <circle cx="39" cy="26.500" r="4.300" />
              <circle cx="27.400" cy="7.500" r="1.500" />
              <circle cx="39.200" cy="7.500" r="1.500" />
              <circle cx="20.600" cy="46" r="2.200" />
              <circle cx="45.500" cy="46" r="2.200" />
            </svg>
            <div>
              <div class="metric-label">Full charge (DC fast) <span class="help">?</span></div>
              <div class="metric-value">£29.16</div>
              <div class="metric-note">at £0.45/kWh</div>
            </div>
          </div>

          <div class="metric">
            <svg class="icon" viewBox="0 0 66 60">
              <path d="M6.500 12 C30 17 34 1 60 8 V47 C34 41 30 56 6.500 50 Z" />
              <circle cx="32.800" cy="29.700" r="7.500" />
              <path d="M16.700 25 V39 M50 20 V34" />
            </svg>
            <div>
              <div class="metric-label">DC cost per 100 mi <span class="help">?</span></div>
              <div class="metric-value">£8.10</div>
              <div class="metric-note">at £0.45/kWh</div>
            </div>
          </div>

          <div class="metric">
            <svg class="icon" viewBox="0 0 66 60">
              <path d="M35.600 2.500 L33.500 23.300 H54.200 L30.600 56 L33.800 34 H11.400 Z" />
            </svg>
            <div>
              <div class="metric-label">DC fast charge time</div>
              <div class="metric-value">in 41 mins</div>
              <div class="metric-note">10–80%</div>
            </div>
          </div>
        </div>
      </main>
    </div>
  </body>
</html>
```

FILE: styles.css
```css
* {
  box-sizing: border-box;
}

body {
  margin: 0;
  background: #fff;
  color: #1e1e1e;
  font-family: Inter, "Liberation Sans", sans-serif;
}

.page {
  display: flex;
  align-items: flex-start;
  height: 1757px;
  overflow: hidden;
}

/* Left column */
.sidebar {
  flex: none;
  width: 889px;
  padding: 48px 80px 0 75px;
}

h1 {
  margin: 0;
  font-size: 88px;
  line-height: 110px;
  font-weight: 700;
  letter-spacing: 0.45px;
}

.sidebar p {
  margin: 46px 0 0;
  font-size: 38.5px;
  line-height: 55px;
  color: #555;
}

/* Grey panel */
.panel {
  width: 2881px;
  height: 1703px;
  padding: 0 89px 0 88px;
  background: #f9f9f9;
  border: 2px solid #f0f0f0;
  border-top: 0;
  border-radius: 0 0 44px 44px;
}

hr {
  height: 3px;
  margin: 65px 0 69px;
  border: 0;
  background: #e8e8e8;
}

h2 {
  display: flex;
  align-items: center;
  gap: 17px;
  margin: 0;
  font-size: 66px;
  line-height: 82px;
  font-weight: 700;
  letter-spacing: 0.15px;
}

h2 .help {
  margin-top: 17px;
}

.intro {
  margin: 32px 0 72px;
  font-size: 38.5px;
  line-height: 55px;
  color: #555;
}

.help {
  flex: none;
  width: 44px;
  height: 44px;
  border-radius: 50%;
  background: #b9b9b9;
  color: #fff;
  font-size: 34px;
  line-height: 44px;
  font-weight: 400;
  text-align: center;
}

/* Map */
.map-card {
  height: 773px;
  padding: 0 43px 44px 44px;
  background: #fff;
  border-radius: 0 0 22px 22px;
}

.map {
  position: relative;
  height: 728px;
  overflow: hidden;
  background: #9bddff;
  border-radius: 0 0 44px 44px;
}

.map-canvas {
  display: block;
  width: 100%;
  height: 100%;
}

.map-canvas path {
  vector-effect: non-scaling-stroke;
}

.west {
  transform: translate(960px, 0) scale(0.612245, 0.510204);
}

.centre {
  transform: translate(1900px, 0) scale(0.70153, 0.510204);
}

.east {
  transform: translate(2900px, 0) scale(0.59949, 0.510204);
}

.grass { fill: #d1ebca; }
.lawn { fill: #cbe9c0; }
.wood { fill: #c3e3b9; }
.hill { fill: #b8d8ae; }
.field { fill: #dfebd9; }
.urban { fill: #f3f1f0; }
.water { fill: #9bddff; }

.road-casing,
.road-yellow,
.road-orange {
  fill: none;
  stroke-linejoin: round;
  stroke-linecap: round;
}

.road-casing {
  stroke: #f8f6ea;
  stroke-width: 8px;
}

.road-casing.soft {
  stroke: #e6ecf6;
  opacity: 0.5;
}

.road-yellow {
  stroke: #eacb2f;
  stroke-width: 4px;
}

.road-orange {
  stroke: #fba055;
  stroke-width: 4.5px;
}

.road-yellow.narrow {
  stroke: #dcc648;
  stroke-width: 3.2px;
}

.road-orange.narrow {
  stroke: #e8a47a;
  stroke-width: 4px;
}

.border {
  fill: none;
  stroke: #6f70cb;
  stroke-width: 3px;
}

.border-halo {
  fill: none;
  stroke: #e6e4f0;
  stroke-width: 8px;
}

.border.thin {
  stroke: #8587d6;
  stroke-width: 2.5px;
}

.city-names text {
  fill: #3c3f42;
  stroke: rgba(255, 255, 255, 0.6);
  stroke-width: 4px;
  paint-order: stroke;
  font-family: Roboto, "Liberation Sans", sans-serif;
  font-size: 33.5px;
}

.city-names .capital {
  font-size: 42px;
  font-weight: 500;
}

.city-names .large {
  font-size: 38px;
}

.zone-1 { fill: rgba(0, 110, 245, 0.15); }
.zone-2 { fill: rgba(0, 110, 245, 0.23); }
.zone-3 { fill: rgba(0, 115, 248, 0.32); }
.zone-4 { fill: rgba(0, 118, 243, 0.45); }

.zone-line {
  fill: none;
  stroke: rgba(226, 238, 255, 0.85);
  stroke-width: 3px;
  stroke-linejoin: round;
}

.zone-line.soft {
  stroke: rgba(205, 226, 252, 0.7);
}

.zone-line.strong {
  stroke: #f4f8ff;
}

.marker {
  fill: #0071f3;
  stroke: #fff;
  stroke-width: 17px;
}

.map-logo {
  position: absolute;
  left: 20px;
  bottom: 19px;
  display: flex;
  align-items: center;
  gap: 7px;
}

.map-logo svg {
  width: 56px;
  height: 56px;
}

.map-logo span {
  margin-top: -4px;
  color: #fff;
  font-size: 45px;
  line-height: 56px;
  font-weight: 700;
  letter-spacing: -1.3px;
  -webkit-text-stroke: 6px #6c9ab5;
  paint-order: stroke fill;
}

.map-controls {
  position: absolute;
  right: 44px;
  bottom: 65px;
  display: flex;
  flex-direction: column;
  gap: 44px;
}

.map-controls button {
  display: flex;
  align-items: center;
  justify-content: center;
  width: 88px;
  height: 88px;
  padding: 0;
  border: 0;
  border-radius: 50%;
  background: #fff;
  box-shadow: 0 4px 26px rgba(0, 0, 0, 0.12);
}

.map-controls svg {
  width: 42px;
  height: 42px;
  stroke: #111;
  stroke-width: 3.5;
}

.map-attribution {
  position: absolute;
  right: 0;
  bottom: 0;
  height: 55px;
  padding: 0 13px 0 14px;
  background: rgba(255, 255, 255, 0.5);
  color: #404040;
  font-family: "Liberation Sans", Arial, sans-serif;
  font-size: 33px;
  line-height: 57px;
  letter-spacing: 0.3px;
  white-space: nowrap;
}

.map-attribution b {
  margin-left: 5px;
  letter-spacing: -0.1px;
}

/* Metrics grid */
.metrics {
  display: grid;
  grid-template-columns: repeat(3, 915px);
  row-gap: 75px;
}

.metric {
  display: flex;
  gap: 11px;
}

.icon {
  flex: none;
  width: 66px;
  height: 60px;
  fill: none;
  stroke: #555;
  stroke-width: 3;
  stroke-linejoin: round;
}

.metric-label {
  display: flex;
  align-items: center;
  gap: 11px;
  font-size: 38.5px;
  line-height: 55px;
  font-weight: 600;
}

.metric-label .help {
  margin-top: -6px;
}

.metric-value {
  margin-top: 18px;
  color: #000;
  font-size: 55px;
  line-height: 66px;
  font-weight: 700;
  letter-spacing: 0.5px;
}

.metric-note {
  margin-top: 10px;
  color: #555;
  font-size: 33px;
  line-height: 44px;
}
```
